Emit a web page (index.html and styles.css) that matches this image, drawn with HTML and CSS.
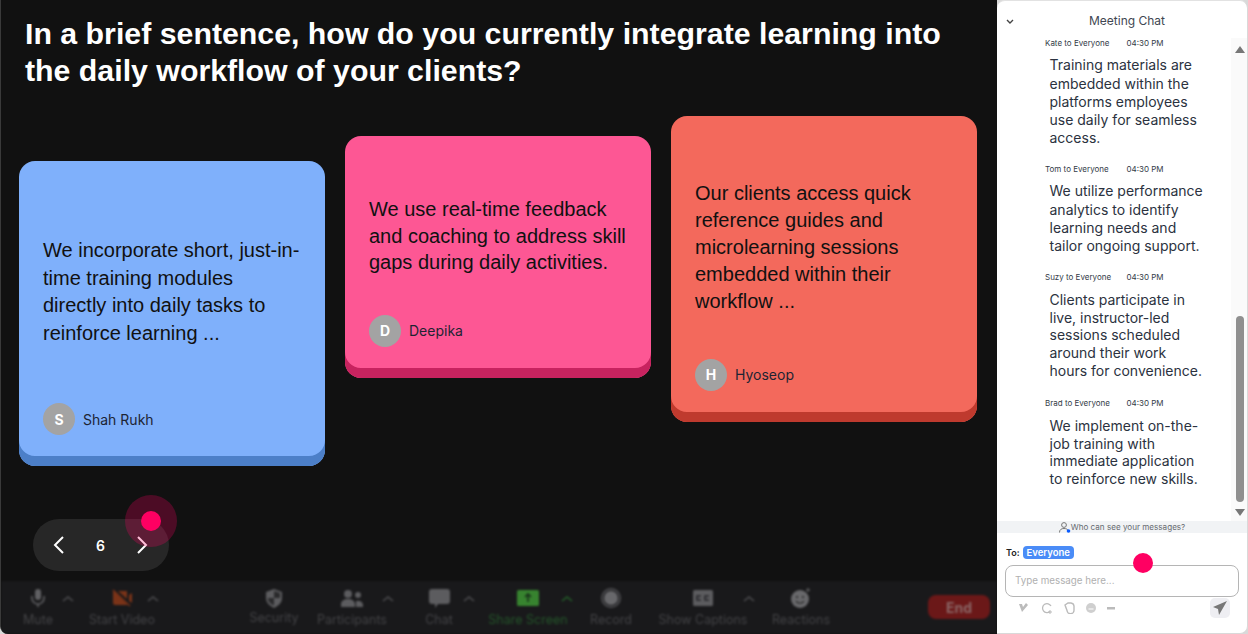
FILE: index.html
```html
<!DOCTYPE html>
<html lang="en">
<head>
  <meta charset="UTF-8">
  <title>Meeting</title>
  <link rel="stylesheet" href="styles.css">
</head>
<body>
  <div class="app">
    <div class="stage">
      <h1 class="question">In a brief sentence, how do you currently integrate learning into the daily workflow of your clients?</h1>

      <div class="cards">
        <div class="card card-blue">
          <p class="card-text">We incorporate short, just-in-time training modules directly into daily tasks to reinforce learning ...</p>
          <div class="author"><span class="avatar">S</span><span>Shah Rukh</span></div>
        </div>
        <div class="card card-pink">
          <p class="card-text">We use real-time feedback and coaching to address skill gaps during daily activities.</p>
          <div class="author"><span class="avatar">D</span><span>Deepika</span></div>
        </div>
        <div class="card card-red">
          <p class="card-text">Our clients access quick reference guides and microlearning sessions embedded within their workflow ...</p>
          <div class="author"><span class="avatar">H</span><span>Hyoseop</span></div>
        </div>
      </div>

      <div class="pager">
        <svg width="14" height="20" viewBox="0 0 14 20"><path d="M11 2 3 10l8 8" fill="none" stroke="#fff" stroke-width="2"/></svg>
        <span class="page-num">6</span>
        <svg width="14" height="20" viewBox="0 0 14 20"><path d="m3 2 8 8-8 8" fill="none" stroke="#fff" stroke-width="2"/></svg>
      </div>
      <div class="pointer-halo"></div>
      <div class="pointer pointer-stage"></div>

      <div class="toolbar">
        <div class="tool tool-mute">
          <div class="tool-icon"><svg width="14" height="18" viewBox="0 0 14 18"><rect x="4" y="0" width="6" height="11" rx="3" fill="#606063"/><path d="M1 7v2a6 6 0 0 0 12 0V7M7 15v3" fill="none" stroke="#606063" stroke-width="1.600"/></svg></div>
          <span>Mute</span>
          <svg class="caret" width="12" height="7" viewBox="0 0 12 7"><path d="m1 6 5-4 5 4" fill="none" stroke="#4d4d50" stroke-width="1.600"/></svg>
        </div>
        <div class="tool tool-video">
          <div class="tool-icon"><svg width="20" height="18" viewBox="0 0 20 18"><path d="M1 1 16 16H3a2 2 0 0 1-2-2zM6 2h9v8zM17 6l3-2v10l-3-2z" fill="#7a3318"/><path d="M1 1l17 16" stroke="#7a3318" stroke-width="1.400"/></svg></div>
          <span>Start Video</span>
          <svg class="caret" width="12" height="7" viewBox="0 0 12 7"><path d="m1 6 5-4 5 4" fill="none" stroke="#4d4d50" stroke-width="1.600"/></svg>
        </div>
        <div class="tool tool-security">
          <div class="tool-icon"><svg width="18" height="19" viewBox="0 0 18 19"><path d="M9 0l8 3v6c0 5-4 8-8 10-4-2-8-5-8-10V3z" fill="#5c5c5f"/><path d="M9 2v7H3c0 4 3 6 6 7.500V9h6V4z" fill="#2a2a2c"/></svg></div>
          <span>Security</span>
        </div>
        <div class="tool tool-participants">
          <div class="tool-icon"><svg width="22" height="17" viewBox="0 0 22 17"><circle cx="7" cy="4" r="4" fill="#5c5c5f"/><circle cx="17" cy="5" r="3" fill="#5c5c5f"/><path d="M0 17v-3c0-3 3-5 7-5s7 2 7 5v3zM15 17v-6c4-1 7 1 7 4v2z" fill="#5c5c5f"/></svg></div>
          <span>Participants</span>
          <svg class="caret" width="12" height="7" viewBox="0 0 12 7"><path d="m1 6 5-4 5 4" fill="none" stroke="#4d4d50" stroke-width="1.600"/></svg>
        </div>
        <div class="tool tool-chat">
          <div class="tool-icon"><svg width="21" height="19" viewBox="0 0 21 19"><path d="M3 0h15a3 3 0 0 1 3 3v9a3 3 0 0 1-3 3H9l-3 4v-4H3a3 3 0 0 1-3-3V3a3 3 0 0 1 3-3z" fill="#5c5c5f"/></svg></div>
          <span>Chat</span>
          <svg class="caret" width="12" height="7" viewBox="0 0 12 7"><path d="m1 6 5-4 5 4" fill="none" stroke="#4d4d50" stroke-width="1.600"/></svg>
        </div>
        <div class="tool tool-share">
          <div class="tool-icon"><svg width="22" height="16" viewBox="0 0 22 16"><rect width="22" height="16" rx="1.500" fill="#37832f"/><path d="M11 4v8M8 7l3-3 3 3" fill="none" stroke="#17301a" stroke-width="1.600"/></svg></div>
          <span>Share Screen</span>
          <svg class="caret" width="12" height="7" viewBox="0 0 12 7"><path d="m1 6 5-4 5 4" fill="none" stroke="#24612a" stroke-width="1.600"/></svg>
        </div>
        <div class="tool tool-record">
          <div class="tool-icon"><svg width="20" height="20" viewBox="0 0 20 20"><circle cx="10" cy="10" r="9" fill="none" stroke="#4a4a4d" stroke-width="2"/><circle cx="10" cy="10" r="7" fill="#68686b"/></svg></div>
          <span>Record</span>
        </div>
        <div class="tool tool-captions">
          <div class="tool-icon"><svg width="20" height="16" viewBox="0 0 20 16"><rect width="20" height="16" rx="1.500" fill="#5c5c5f"/><path d="M8 6H4v4h4M16 6h-4v4h4" fill="none" stroke="#26262a" stroke-width="1.600"/></svg></div>
          <span>Show Captions</span>
          <svg class="caret" width="12" height="7" viewBox="0 0 12 7"><path d="m1 6 5-4 5 4" fill="none" stroke="#4d4d50" stroke-width="1.600"/></svg>
        </div>
        <div class="tool tool-reactions">
          <div class="tool-icon"><svg width="20" height="20" viewBox="0 0 20 20"><circle cx="9" cy="11" r="9" fill="#68686b"/><circle cx="6" cy="9" r="1" fill="#222"/><circle cx="12" cy="9" r="1" fill="#222"/><path d="M5 13c2 3 6 3 8 0" fill="none" stroke="#222" stroke-width="1.200"/><path d="M17 0v4M15 2h4" stroke="#68686b"/></svg></div>
          <span>Reactions</span>
        </div>
        <div class="end-btn">End</div>
      </div>
    </div>

    <aside class="chat">
      <div class="chat-head">
        <svg width="8" height="6" viewBox="0 0 8 6"><path d="m1 1 3 3 3-3" fill="none" stroke="#444" stroke-width="1.400"/></svg>
        <span>Meeting Chat</span>
      </div>

      <div class="chat-scroll">
        <div class="messages">
          <div class="msg">
            <div class="msg-meta"><span class="msg-from">Kate to Everyone</span><span>04:30 PM</span></div>
            <p class="msg-text">Training materials are embedded within the platforms employees use daily for seamless access.</p>
          </div>
          <div class="msg">
            <div class="msg-meta"><span class="msg-from">Tom to Everyone</span><span>04:30 PM</span></div>
            <p class="msg-text">We utilize performance analytics to identify learning needs and tailor ongoing support.</p>
          </div>
          <div class="msg msg-tight">
            <div class="msg-meta"><span class="msg-from">Suzy to Everyone</span><span>04:30 PM</span></div>
            <p class="msg-text">Clients participate in live, instructor-led sessions scheduled around their work hours for convenience.</p>
          </div>
          <div class="msg msg-tight">
            <div class="msg-meta"><span class="msg-from">Brad to Everyone</span><span>04:30 PM</span></div>
            <p class="msg-text">We implement on-the-job training with immediate application to reinforce new skills.</p>
          </div>
        </div>
        <div class="scrollbar">
          <svg width="10" height="7" viewBox="0 0 10 7"><path d="M5 0l5 7H0z" fill="#777"/></svg>
          <div class="scroll-track"><div class="scroll-thumb"></div></div>
          <svg width="10" height="7" viewBox="0 0 10 7"><path d="M5 7 0 0h10z" fill="#777"/></svg>
        </div>
      </div>

      <div class="who-bar">
        <svg width="12" height="11" viewBox="0 0 12 11"><circle cx="5" cy="3" r="2.400" fill="none" stroke="#777"/><path d="M.5 10.500c0-3 2-4 4.500-4s4 1 4 2" fill="none" stroke="#777"/><circle cx="9.500" cy="9" r="1.800" fill="#0b5cff"/></svg>
        <span>Who can see your messages?</span>
      </div>

      <div class="compose">
        <div class="to-row"><span>To:</span><span class="to-badge">Everyone</span></div>
        <div class="msg-input">Type message here...</div>
        <div class="compose-tools">
          <svg width="12" height="12" viewBox="0 0 12 12"><path d="M1 2l3 8 6-7-2-2-3 4-1-3z" fill="#bbb"/></svg>
          <svg width="12" height="12" viewBox="0 0 12 12"><path d="M9 9.500A4.500 4.500 0 1 1 10 4" fill="none" stroke="#bbb" stroke-width="1.300"/><path d="M9 8v4M7 10h4" stroke="#bbb"/></svg>
          <svg width="11" height="12" viewBox="0 0 11 12"><path d="M1 3l3-2h3a3.500 3.500 0 0 1 3 3v4a3.500 3.500 0 0 1-7 .5z" fill="none" stroke="#bbb" stroke-width="1.400"/></svg>
          <svg width="10" height="10" viewBox="0 0 10 10"><circle cx="5" cy="5" r="5" fill="#cfcfcf"/><path d="M2.500 6h5" stroke="#fff"/></svg>
          <svg width="8" height="3" viewBox="0 0 8 3"><rect width="8" height="2.500" fill="#bbb"/></svg>
          <div class="send-btn">
            <svg width="14" height="14" viewBox="0 0 14 14"><path d="M14 0 0 6l5 2 1 6z" fill="#777"/></svg>
          </div>
        </div>
      </div>
      <div class="pointer pointer-chat"></div>
    </aside>
  </div>
</body>
</html>
```
FILE: styles.css
```css
* {
  box-sizing: border-box;
}

body {
  margin: 0;
  font-family: Inter, sans-serif;
  background-color: #d9d9d9;
  overflow: hidden;
}

.app {
  display: flex;
  width: 1248px;
  height: 634px;
  overflow: hidden;
}

/* left side */
.stage {
  position: relative;
  width: 997px;
  background-color: #111111;
  border-radius: 0 0 0 8px;
  display: flex;
  flex-direction: column;
  overflow: hidden;
  border-left: 1px solid #3a3a3a;
}

.question {
  margin: 0;
  padding: 15px 30px 0 24px;
  font-family: "Liberation Sans", Arial, sans-serif;
  font-size: 30.300px;
  font-weight: 700;
  line-height: 37px;
  color: #ffffff;
}

.cards {
  display: flex;
  gap: 20px;
  padding-left: 18px;
  align-items: flex-start;
}

.card {
  width: 306px;
  border-radius: 16px;
  padding: 0 24px;
  display: flex;
  flex-direction: column;
  color: #111;
}

.card-text {
  margin: 0;
  font-family: "Liberation Sans", Arial, sans-serif;
  font-size: 20px;
  line-height: 27.500px;
}

.card-blue {
  margin-top: 72px;
  height: 305px;
  padding-top: 76px;
  background-color: #7fb0fb;
  box-shadow: inset 0 -10px 0 #4c7fc8;
}

.card-pink {
  margin-top: 47px;
  height: 242px;
  padding-top: 60px;
  background-color: #fd5794;
  box-shadow: inset 0 -10px 0 #c7235f;
}

.card-pink .card-text {
  line-height: 26.500px;
}

.card-red {
  margin-top: 27px;
  height: 306px;
  padding-top: 64px;
  background-color: #f3695c;
  box-shadow: inset 0 -10px 0 #bf3a2e;
}

.card-red .card-text {
  line-height: 27px;
}

.card-blue .author { margin-top: 56px; }
.card-pink .author { margin-top: 39px; }
.card-red .author { margin-top: 43.500px; }

.author {
  display: flex;
  align-items: center;
  gap: 8px;
  font-size: 14px;
  color: #1d2433;
}

.avatar {
  width: 32px;
  height: 32px;
  border-radius: 50%;
  background-color: #a3a3a3;
  color: #fff;
  font-weight: 700;
  font-size: 14px;
  display: flex;
  align-items: center;
  justify-content: center;
}

.pager {
  position: absolute;
  left: 32px;
  top: 519px;
  width: 136px;
  height: 52px;
  border-radius: 26px;
  background-color: #272727;
  display: flex;
  align-items: center;
  justify-content: space-between;
  padding: 0 20px 0 19px;
  color: #fff;
  font-size: 14px;
  font-weight: 600;
}

.pointer-halo {
  position: absolute;
  left: 124px;
  top: 495px;
  width: 52px;
  height: 52px;
  border-radius: 50%;
  background-color: rgba(255, 0, 98, 0.25);
}

.pointer {
  position: absolute;
  width: 20px;
  height: 20px;
  border-radius: 50%;
  background-color: #ff0062;
  z-index: 5;
}

.pointer-stage {
  left: 140px;
  top: 511px;
}

.pointer-chat {
  left: 136px;
  top: 552px;
}

/* zoom toolbar, dimmed */
.toolbar {
  margin-top: auto;
  height: 53px;
  padding: 6px 0 0 17px;
  background-color: #19191b;
  position: relative;
  display: flex;
  align-items: flex-start;
  filter: blur(0.9px);
}

.tool {
  position: relative;
  display: flex;
  flex-direction: column;
  align-items: center;
  font-size: 12.500px;
  line-height: 16px;
  color: #434346;
  white-space: nowrap;
}

.tool-icon {
  height: 22px;
  display: flex;
  align-items: center;
  margin-bottom: 3px;
}

.caret {
  position: absolute;
  top: 8px;
}

.tool-mute { width: 40px; }
.tool-mute .caret { left: 44px; }

.tool-video { width: 68px; margin-left: 30px; }
.tool-video .caret { left: 59px; }

.tool-security { width: 52px; margin-left: 92px; }
.tool-security .tool-icon { margin-bottom: 1px; }

.tool-participants { width: 72px; margin-left: 16px; }
.tool-participants .caret { left: 66px; }

.tool-chat { width: 30px; margin-left: 36px; }
.tool-chat .caret { left: 39px; }

.tool-share { width: 80px; margin-left: 34px; color: #24552a; }
.tool-share .caret { left: 73px; }

.tool-record { width: 44px; margin-left: 21px; }

.tool-captions { width: 92px; margin-left: 24px; }
.tool-captions .caret { left: 86px; }

.tool-reactions { width: 60px; margin-left: 22px; }

.end-btn {
  position: absolute;
  left: 927px;
  top: 14px;
  width: 62px;
  height: 24px;
  border-radius: 8px;
  background-color: #6b1818;
  color: #8a6666;
  font-size: 14px;
  font-weight: 700;
  display: flex;
  align-items: center;
  justify-content: center;
}

/* chat panel */
.chat {
  position: relative;
  width: 251px;
  background-color: #ffffff;
  border-radius: 8px 8px 8px 0;
  border-right: 1px solid #d9d9d9;
  border-top: 1px solid #e2e2e2;
  border-bottom: 1px solid #d9d9d9;
  display: flex;
  flex-direction: column;
}

.chat-head {
  height: 37px;
  position: relative;
  display: flex;
  align-items: center;
  justify-content: center;
  font-size: 12px;
  color: #3f4752;
  padding: 2px 0 0 10px;
}

.chat-head svg {
  position: absolute;
  left: 9px;
  top: 18px;
}

.chat-scroll {
  flex: 1;
  display: flex;
  min-height: 0;
}

.messages {
  flex: 1;
  padding-left: 48px;
  overflow: hidden;
}

.msg {
  margin-bottom: 16.500px;
}

.msg-meta {
  display: flex;
  font-size: 8px;
  height: 10px;
  line-height: 10px;
  color: #333b47;
}

.msg-from {
  width: 81.500px;
}

.msg-text {
  margin: 8.400px 0 0 4.500px;
  font-size: 14px;
  line-height: 18.200px;
  color: #2b3240;
  width: 156px;
}

.msg-tight {
  margin-bottom: 18px;
}

.msg-tight .msg-text {
  margin-top: 9.400px;
  line-height: 17.700px;
}

.scrollbar {
  width: 16px;
  display: flex;
  flex-direction: column;
  align-items: center;
  gap: 2px;
  background-color: #fafafa;
  padding: 8px 0 5px 2px;
}

.scroll-track {
  flex: 1;
  width: 8px;
  display: flex;
  flex-direction: column;
  justify-content: flex-end;
}

.scroll-thumb {
  height: 186px;
  background-color: #8f8f8f;
  border-radius: 4px;
  margin-bottom: 5px;
}

.who-bar {
  height: 12px;
  background-color: #f1f3f5;
  display: flex;
  align-items: center;
  justify-content: center;
  font-size: 8.100px;
  color: #666a70;
}

.compose {
  height: 100px;
  padding: 13px 8px 0;
}

.to-row {
  display: flex;
  align-items: center;
  gap: 3px;
  margin-left: 1px;
  font-size: 9px;
  font-weight: 600;
  color: #222;
}

.to-badge {
  background-color: #4a8cf7;
  color: #fff;
  border-radius: 4px;
  padding: 0 4px;
  height: 13px;
  line-height: 13px;
  font-size: 9.500px;
}

.msg-input {
  margin-top: 6px;
  height: 32px;
  width: 234px;
  border: 1px solid #b5b5b5;
  border-radius: 8px;
  padding-left: 9px;
  font-size: 9.800px;
  line-height: 30px;
  color: #b0b0b0;
}

.compose-tools {
  display: flex;
  align-items: center;
  gap: 11px;
  padding-left: 13px;
  margin-top: 1px;
  position: relative;
  height: 20px;
}

.send-btn {
  position: absolute;
  left: 205px;
  top: 0;
  width: 20px;
  height: 20px;
  border-radius: 5px;
  background-color: #eeeef2;
  display: flex;
  align-items: center;
  justify-content: center;
}
```
